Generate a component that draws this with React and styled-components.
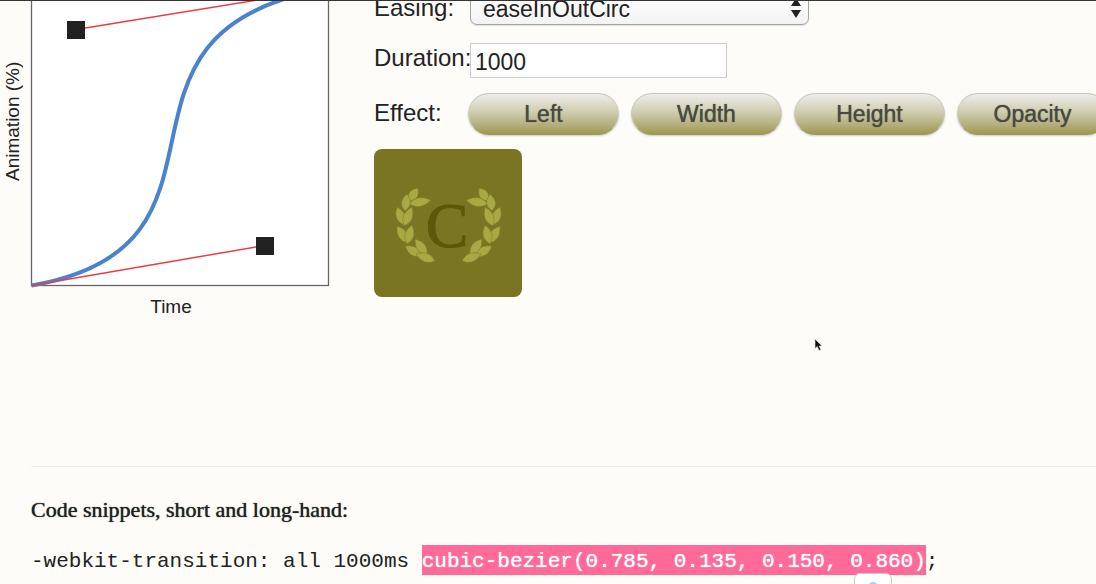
import React, { useState } from "react";
import styled, { createGlobalStyle } from "styled-components";

const effects = ["Left", "Width", "Height", "Opacity"];
const easings = ["easeInOutCirc", "easeInCirc", "easeOutCirc", "linear"];

// one half of the wreath: base x, base y, tip x, tip y
const leaves = [
  [35, 52, 44, 39],
  [35, 55, 57, 51],
  [31, 62, 33, 45],
  [30, 76, 23, 58],
  [30, 77, 38, 58],
  [34, 94, 23, 77],
  [33, 95, 38, 76],
  [48, 107, 31, 97],
  [53, 106, 41, 90],
  [61, 112, 42, 105],
];

function leafPath([x1, y1, x2, y2]) {
  const dx = (x2 - x1) * 0.45;
  const dy = (y2 - y1) * 0.45;
  const mx = x1 + dx;
  const my = y1 + dy;
  const len = Math.hypot(dx, dy);
  const nx = (-dy / len) * 9;
  const ny = (dx / len) * 9;
  return `M${x1} ${y1}Q${mx + nx} ${my + ny} ${x2} ${y2}Q${mx - nx} ${my - ny} ${x1} ${y1}Z`;
}

function Branch() {
  return leaves.map((leaf) => <path key={leaf.join()} d={leafPath(leaf)} />);
}

function CurveGraph() {
  return (
    <Figure>
      <Plot>
        <AxisY>Animation (%)</AxisY>
        <Graph width="298" height="298" viewBox="0 0 298 298">
          <rect x="0.5" y="0.5" width="297" height="297" fill="#fff" stroke="#68666c" strokeWidth="1.3" />
          <path d="M0.5 297.5C233.5 257.5 45 42 297.5 0.5" fill="none" stroke="#4a82cf" strokeWidth="4" />
          <path d="M0.5 297.5L233.5 257.5M45 41.5L297.5 0.5" stroke="#ee3b43" strokeWidth="1.5" />
          <rect x="225" y="249" width="18" height="18" fill="#222" />
          <rect x="36" y="33" width="18" height="18" fill="#222" />
        </Graph>
      </Plot>
      <AxisX>Time</AxisX>
    </Figure>
  );
}

function App() {
  const [easing, setEasing] = useState("easeInOutCirc");
  const [duration, setDuration] = useState("1000");

  return (
    <Screen>
      <GlobalStyle />
      <Page>
        <Tool>
          <CurveGraph />
          <Controls>
            <Row>
              <Label htmlFor="easing">Easing:</Label>
              <SelectBox>
                <Select id="easing" value={easing} onChange={(e) => setEasing(e.target.value)}>
                  {easings.map((name) => (
                    <option key={name}>{name}</option>
                  ))}
                </Select>
                <Arrows width="12" height="20" viewBox="0 0 12 20">
                  <path d="M6 0L11 8H1ZM6 20L11 12H1Z" fill="#222" />
                </Arrows>
              </SelectBox>
            </Row>
            <Row>
              <Label htmlFor="duration">Duration:</Label>
              <Input id="duration" value={duration} onChange={(e) => setDuration(e.target.value)} />
            </Row>
            <Row>
              <Label as="span" $tall>
                Effect:
              </Label>
              <Buttons>
                {effects.map((effect) => (
                  <Button key={effect} type="button">
                    {effect}
                  </Button>
                ))}
              </Buttons>
            </Row>
            <Tile viewBox="0 0 148 148" width="148" height="148">
              <g fill="#a9a943" stroke="#7a7523" strokeWidth="0.5">
                <Branch />
                <g transform="translate(149 0) scale(-1 1)">
                  <Branch />
                </g>
              </g>
              <text x="73" y="98" textAnchor="middle">
                C
              </text>
            </Tile>
          </Controls>
        </Tool>
        <Snippets>
          <h3>Code snippets, short and long-hand:</h3>
          <Code>
            -webkit-transition: all {duration}ms{" "}
            <Mark>
              cubic-bezier(0.785, 0.135, 0.150, 0.860)
              <Popup>
                <svg width="10" height="6" viewBox="0 0 10 6">
                  <ellipse cx="5" cy="5" rx="5" ry="5" fill="#a9d3e4" />
                </svg>
              </Popup>
            </Mark>
            ;
          </Code>
        </Snippets>
      </Page>
      <Cursor width="10" height="14" viewBox="0 0 10 14">
        <path
          d="M1 1V10.500L3.200 8.500L5 12.500L6.800 11.700L5.200 8H8Z"
          fill="#111"
          stroke="#e4e4e0"
          strokeWidth="0.6"
        />
      </Cursor>
    </Screen>
  );
}

const GlobalStyle = createGlobalStyle`
  * {
    box-sizing: border-box;
  }
  body {
    margin: 0;
    background: #fdfcf8;
    color: #222;
    font-family: "Liberation Sans", Arial, sans-serif;
  }
`;
const Screen = styled.div`
  position: relative;
  height: 100vh;
  overflow: hidden;
  border-top: 1px solid #383435;
`;
/* scrolled a little past the top of the graph */
const Page = styled.main`
  margin-top: -13px;
`;
const Tool = styled.div`
  display: flex;
  gap: 32px;
`;
const Figure = styled.div`
  flex: none;
  width: 342px;
`;
const Plot = styled.div`
  display: flex;
`;
const AxisY = styled.div`
  width: 31px;
  padding: 32px 1px 0 0;
  writing-mode: vertical-rl;
  transform: rotate(180deg);
  text-align: center;
  font-size: 19px;
  line-height: 24px;
`;
const Graph = styled.svg`
  display: block;
  overflow: visible;
`;
const AxisX = styled.div`
  margin-top: 9px;
  text-align: center;
  font-size: 19px;
  line-height: 24px;
`;
const Controls = styled.div`
  flex: 1;
  min-width: 0;
  display: flex;
  flex-direction: column;
  gap: 14px;
  padding-top: 5px;
`;
const Row = styled.div`
  display: flex;
  align-items: flex-start;
  min-height: 36px;
`;
const Label = styled.label`
  flex: none;
  width: ${(props) => (props.$tall ? "94px" : "96px")};
  font-size: 24px;
  line-height: ${(props) => (props.$tall ? "40px" : "30px")};
`;
const SelectBox = styled.div`
  position: relative;
  width: 339px;
`;
const Select = styled.select`
  appearance: none;
  width: 100%;
  height: 32px;
  padding: 0 32px 0 12px;
  border: 1px solid #a5a5a5;
  border-radius: 7px;
  background: linear-gradient(#fff, #f3f3f3);
  box-shadow: 0 1px 1px #ddd;
  color: #222;
  font: 23px "Liberation Sans", Arial, sans-serif;
`;
const Arrows = styled.svg`
  position: absolute;
  top: 5px;
  right: 7px;
  pointer-events: none;
`;
const Input = styled.input`
  width: 257px;
  height: 35px;
  padding: 3px 4px 0;
  border: 1px solid #ccc;
  background: #fff;
  color: #222;
  font: 23px "Liberation Sans", Arial, sans-serif;
`;
const Buttons = styled.div`
  display: flex;
  gap: 12px;
`;
const Button = styled.button`
  flex: none;
  width: 151px;
  height: 42px;
  padding: 0;
  border: 1px solid #c9c8bc;
  border-bottom-color: #a09a62;
  border-radius: 21px;
  background: linear-gradient(#eeeeea, #cfcdb0 45%, #9f9955);
  box-shadow: 0 1px 2px #ccc;
  color: #4a4940;
  font: 23px "Liberation Sans", Arial, sans-serif;
  text-shadow: 0 0 1px #4a4940;
`;
const Tile = styled.svg`
  display: block;
  border-radius: 8px;
  background: #7a7523;
  text {
    fill: #5d5709;
    stroke: #5d5709;
    font: 64px "Liberation Serif", "Times New Roman", serif;
  }
`;
const Snippets = styled.section`
  margin: 147px 0 0 31px;
  padding-top: 29px;
  border-top: 1px solid #eeeeec;
  h3 {
    margin: 0;
    font: 22px/28px "Liberation Serif", "Times New Roman", serif;
    text-shadow: 0 0 1px #222;
  }
`;
const Code = styled.pre`
  margin: 22px 0 0;
  font: 21px/32px "Liberation Mono", "Courier New", monospace;
`;
const Mark = styled.mark`
  position: relative;
  padding: 5px 0 2px;
  background: #ff6a98;
  color: #fff;
  text-shadow: 0 0 1px #fff;
`;
const Popup = styled.span`
  position: absolute;
  top: 28px;
  right: 34px;
  width: 38px;
  height: 32px;
  padding-top: 8px;
  border: 1px solid #ccc;
  border-radius: 6px;
  background: #fff;
  line-height: 0;
  text-align: center;
`;
const Cursor = styled.svg`
  position: absolute;
  top: 337px;
  left: 814px;
`;
export default App;
